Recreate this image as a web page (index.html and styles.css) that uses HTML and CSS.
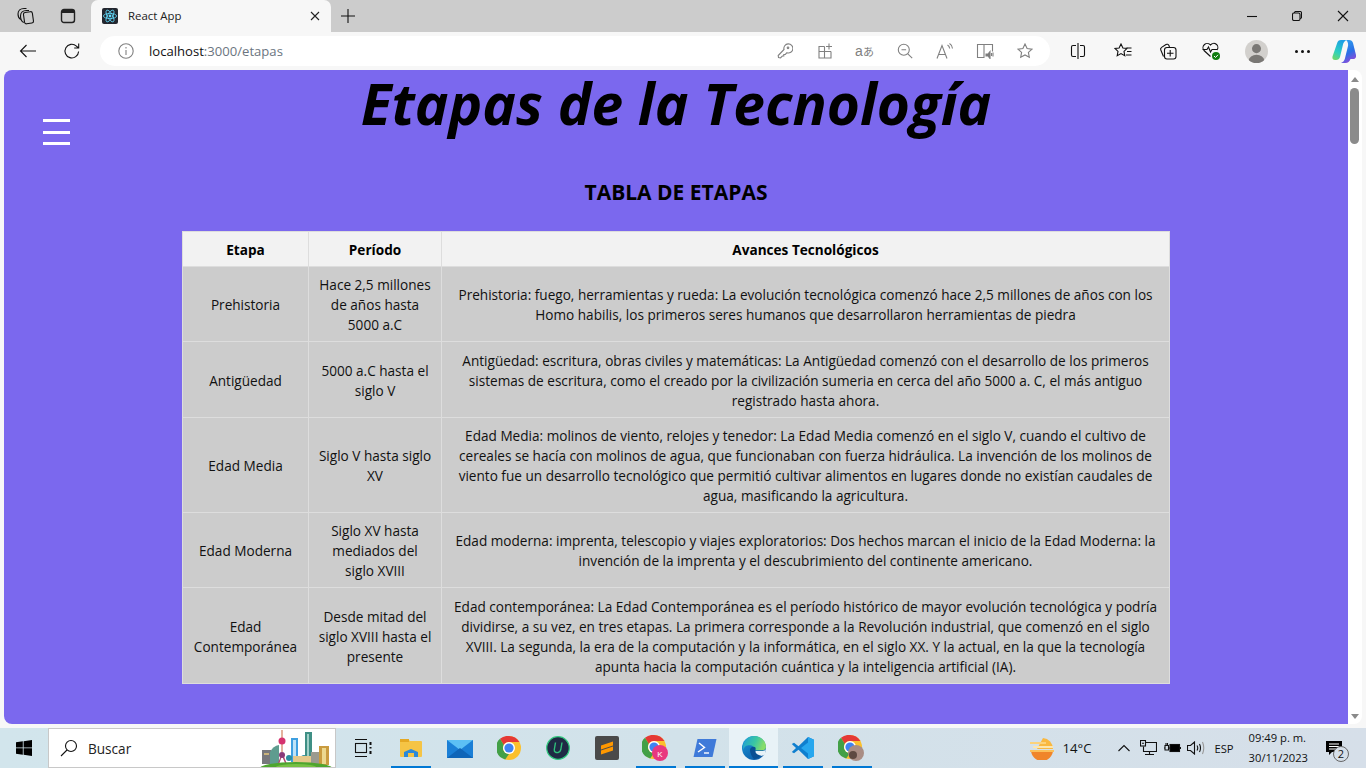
FILE: index.html
```html
<!DOCTYPE html>
<html lang="es">
<head>
<meta charset="utf-8">
<title>React App</title>
<link rel="stylesheet" href="styles.css">
</head>
<body>
<div class="screen">
  <header class="tabstrip">
    <div class="strip-btn first"><svg width="18" height="18" viewBox="0 0 18 18" class="ico"><rect x="7" y="5" width="9" height="11.500" rx="1.800" transform="rotate(-8 11.500 11)"/><path d="M6.800 15.500C4.500 14.500 3.500 12 3.500 9c0-3.500 2.500-5.500 6-5.500h2.500"/><path d="M3.800 12.500C2 11.500 1 9.500 1 7c0-3.500 2.500-5.500 6-5.500h2.500"/></svg></div>
    <div class="strip-btn"><svg width="16" height="16" viewBox="0 0 16 16" class="ico dark"><rect x="1.500" y="1.500" width="13" height="13" rx="2.500"/><path d="M2 3.500h12" stroke-width="3"/></svg></div>
    <div class="tab">
      <svg width="16" height="16" viewBox="0 0 16 16" class="favicon"><rect width="16" height="16" rx="2" fill="#23272f"/><g fill="none" stroke="#61dafb" stroke-width=".8"><ellipse cx="8" cy="8" rx="6.600" ry="2.600"/><ellipse cx="8" cy="8" rx="6.600" ry="2.600" transform="rotate(60 8 8)"/><ellipse cx="8" cy="8" rx="6.600" ry="2.600" transform="rotate(120 8 8)"/></g><circle cx="8" cy="8" r="1.400" fill="#61dafb"/></svg>
      <span class="tab-title">React App</span>
      <svg width="10" height="10" viewBox="0 0 10 10" class="ico tab-x"><path d="M1 1l8 8M9 1l-8 8"/></svg>
    </div>
    <div class="newtab"><svg width="14" height="14" viewBox="0 0 14 14" class="ico"><path d="M7 0v14M0 7h14"/></svg></div>
    <div class="winctl">
      <svg width="10" height="10" viewBox="0 0 10 10" class="ico"><path d="M0 5.500h10"/></svg>
      <svg width="10" height="10" viewBox="0 0 10 10" class="ico"><rect x=".5" y="2" width="7.500" height="7.500" rx="1.500"/><path d="M2.500 2V1.800A1.300 1.300 0 0 1 3.800.5h4.400a1.300 1.300 0 0 1 1.300 1.300v4.400A1.300 1.300 0 0 1 8 7.500"/></svg>
      <svg width="12" height="12" viewBox="0 0 12 12" class="ico"><path d="M1 1l10 10M11 1L1 11"/></svg>
    </div>
  </header>
  <nav class="toolbar">
    <svg width="18" height="14" viewBox="0 0 18 14" class="ico back"><path d="M17 7H1.500M7.500 1L1.500 7l6 6"/></svg>
    <svg width="18" height="18" viewBox="0 0 18 18" class="ico reload"><path d="M15.600 9.500a6.800 6.800 0 1 1-2.200-5.400L15.500 6M15.700 1.500V6H11.200"/></svg>
    <div class="address">
      <svg width="16" height="16" viewBox="0 0 16 16" class="ico-grey info"><circle cx="8" cy="8" r="7.200"/><path d="M8 7v5M8 4v1.400"/></svg>
      <span class="url"><span class="url-host">localhost</span>:3000/etapas</span>
      <div class="addr-icons">
        <svg width="16" height="16" viewBox="0 0 16 16" class="ico-grey"><path d="M7 6.500a4.500 4.500 0 1 1 3 3.200L8.300 11.500H6.800V13H5.300L3.500 14.800 1.500 14.500 1.200 12.500z"/><circle cx="11" cy="4.800" r=".8"/></svg>
        <svg width="16" height="16" viewBox="0 0 16 16" class="ico-grey"><path d="M7.500 3.500H2v11.500h12V8.500M2 8.500h12M7.500 3.500V15M12 0.500v6M9 3.500h6"/></svg>
        <svg width="20" height="16" viewBox="0 0 20 16" class="ico-grey"><text x="0" y="12.500" class="glyph">a</text><text x="8" y="13" class="glyph small">あ</text></svg>
        <svg width="16" height="16" viewBox="0 0 16 16" class="ico-grey"><circle cx="6.800" cy="6.800" r="5.500"/><path d="M4.500 6.800h4.600M10.800 10.800l4.400 4.400"/></svg>
        <svg width="18" height="16" viewBox="0 0 18 16" class="ico-grey"><path d="M1 15.500L6 2.500l5 13M2.800 11.500h6.500M11.500 2c1.200.6 2 1.800 2.200 3.500M13.500 .5c1.800 1 2.800 2.800 3 5"/></svg>
        <svg width="18" height="16" viewBox="0 0 18 16" class="ico-grey"><path d="M8.500 14.500H1.500V1.500h6.500v13M8 1.500h8.500v7"/><path d="M10 11h2l2-2.500v7L12 13h-2z" fill="#777"/><path d="M15.500 10v3M17 9.500v4"/></svg>
        <svg width="16" height="16" viewBox="0 0 16 16" class="ico-grey"><path d="M8 1l2.100 4.500 4.900.6-3.600 3.300.9 4.900L8 11.900l-4.300 2.400.9-4.900L1 6.100l4.900-.6z"/></svg>
      </div>
    </div>
    <div class="tool-icons">
      <svg width="16" height="16" viewBox="0 0 16 16" class="ico"><path d="M6 2.500H3A1.500 1.500 0 0 0 1.500 4v8A1.500 1.500 0 0 0 3 13.500h3M10 2.500h3A1.500 1.500 0 0 1 14.500 4v8a1.500 1.500 0 0 1-1.500 1.500h-3M8 0v16"/></svg>
      <svg width="18" height="16" viewBox="0 0 18 16" class="ico"><path d="M7 1l1.900 4 4.100.5-3 2.900.8 4.300L7 10.600l-3.800 2.100.8-4.300-3-2.900L5.100 5zM12.500 5h5M13 8.500h4.500M12 12h5.500"/></svg>
      <svg width="18" height="18" viewBox="0 0 18 18" class="ico"><rect x="5.500" y="5.500" width="11.500" height="11.500" rx="2.500"/><path d="M11.200 8v6.500M8 11.200h6.500M4.500 14.500L1.800 8a2 2 0 0 1 .8-2.600L7 2.500a2 2 0 0 1 2.800.8L10.500 5"/></svg>
      <svg width="20" height="20" viewBox="0 0 20 20" class="ico health"><path d="M9.500 15.500L3 9.500A4 4 0 0 1 9.500 4a4 4 0 0 1 6.500 5M1.500 8.500H6l1.500-2.500 2 5 1.500-2.500h5.500"/><circle cx="15" cy="15" r="4" fill="#107c10" stroke="none"/><path d="M13 15l1.500 1.500L17 13.800" stroke="#fff" stroke-width="1"/></svg>
      <svg width="23" height="23" viewBox="0 0 24 24" class="avatar"><defs><clipPath id="avclip"><circle cx="12" cy="12" r="12"/></clipPath></defs><circle cx="12" cy="12" r="12" fill="#d2d0cd"/><g clip-path="url(#avclip)" fill="#7a7875"><circle cx="12" cy="9" r="4.700"/><ellipse cx="12" cy="21" rx="8" ry="5.500"/></g></svg>
      <div class="dots"><span></span><span></span><span></span></div>
      <svg width="24" height="24" viewBox="0 0 24 24" class="copilot"><defs><linearGradient id="cp1" x1=".6" y1="0" x2=".2" y2="1"><stop offset="0" stop-color="#1c9ee6"/><stop offset=".6" stop-color="#2dd0c0"/><stop offset="1" stop-color="#6fd86a"/></linearGradient><linearGradient id="cp2" x1=".3" y1="0" x2=".7" y2="1"><stop offset="0" stop-color="#2fa0ee"/><stop offset=".55" stop-color="#2b6fe6"/><stop offset="1" stop-color="#9b46d8"/></linearGradient></defs><path d="M14 1h3c2 0 3.500 1 4 3l3 12c.5 2-.5 4-3 4h-2.500c-1 2.500-2.500 4-5 4H9c2-.8 3.200-2 3.800-4L16 7c.4-2.500-.4-5-2-6z" fill="url(#cp2)"/><path d="M9 1h5.500c-2 1-3 2.500-3.500 4.500L8 18c-.5 2-2 3-4 3H3C1 21 0 19.500.5 17.500L5 4.500C5.600 2 7 1 9 1z" fill="url(#cp1)"/></svg>
    </div>
  </nav>
  <div class="viewport">
    <main class="page">
      <button class="burger" aria-label="Menú"><span></span><span></span><span></span></button>
      <h1 class="title">Etapas de la Tecnología</h1>
      <h2 class="subtitle">TABLA DE ETAPAS</h2>
      <table class="stages">
        <colgroup><col class="c1"><col class="c2"><col class="c3"></colgroup>
        <thead>
          <tr class="rh"><th>Etapa</th><th>Período</th><th>Avances Tecnológicos</th></tr>
        </thead>
        <tbody>
          <tr class="r75"><td>Prehistoria</td><td>Hace 2,5 millones<br>de años hasta<br>5000 a.C</td><td>Prehistoria: fuego, herramientas y rueda: La evolución tecnológica comenzó hace 2,5 millones de años con los<br>Homo habilis, los primeros seres humanos que desarrollaron herramientas de piedra</td></tr>
          <tr class="r76"><td>Antigüedad</td><td>5000 a.C hasta el<br>siglo V</td><td>Antigüedad: escritura, obras civiles y matemáticas: La Antigüedad comenzó con el desarrollo de los primeros<br>sistemas de escritura, como el creado por la civilización sumeria en cerca del año 5000 a. C, el más antiguo<br>registrado hasta ahora.</td></tr>
          <tr class="r95"><td>Edad Media</td><td>Siglo V hasta siglo<br>XV</td><td>Edad Media: molinos de viento, relojes y tenedor: La Edad Media comenzó en el siglo V, cuando el cultivo de<br>cereales se hacía con molinos de agua, que funcionaban con fuerza hidráulica. La invención de los molinos de<br>viento fue un desarrollo tecnológico que permitió cultivar alimentos en lugares donde no existían caudales de<br>agua, masificando la agricultura.</td></tr>
          <tr class="r75"><td>Edad Moderna</td><td>Siglo XV hasta<br>mediados del<br>siglo XVIII</td><td>Edad moderna: imprenta, telescopio y viajes exploratorios: Dos hechos marcan el inicio de la Edad Moderna: la<br>invención de la imprenta y el descubrimiento del continente americano.</td></tr>
          <tr class="r96"><td>Edad<br>Contemporánea</td><td>Desde mitad del<br>siglo XVIII hasta el<br>presente</td><td>Edad contemporánea: La Edad Contemporánea es el período histórico de mayor evolución tecnológica y podría<br>dividirse, a su vez, en tres etapas. La primera corresponde a la Revolución industrial, que comenzó en el siglo<br>XVIII. La segunda, la era de la computación y la informática, en el siglo XX. Y la actual, en la que la tecnología<br>apunta hacia la computación cuántica y la inteligencia artificial (IA).</td></tr>
        </tbody>
      </table>
    </main>
    <aside class="scrollbar">
      <span class="arrow-up"></span>
      <span class="thumb"></span>
      <span class="arrow-down"></span>
    </aside>
  </div>
  <footer class="taskbar">
    <div class="start"><svg width="16" height="16" viewBox="0 0 16 16" fill="#000"><path d="M0 2.300L6.800 1.300V7.500H0zM7.600 1.200L16 0V7.500H7.600zM0 8.300H6.800V14.700L0 13.700zM7.600 8.300H16V16L7.600 14.800z"/></svg></div>
    <div class="search">
      <svg width="18" height="18" viewBox="0 0 18 18" class="ico"><circle cx="11" cy="7" r="5.500"/><path d="M7 11l-6 6"/></svg>
      <span class="search-text">Buscar</span>
      <svg width="78" height="38" viewBox="0 0 78 38" class="city">
        <rect x="5" y="20" width="9" height="14" fill="#77777c"/><rect x="7" y="23" width="5" height="2" fill="#c9b27a"/>
        <path d="M13 34V22q3-6 9-7v19z" fill="#5f9c8f"/>
        <path d="M24.500 0h1v22h-1z" fill="#c9663c"/><path d="M21 33l3.500-9h1.500l3.500 9h-1.500L25 26l-2.500 7z" fill="#b44a72"/>
        <circle cx="25" cy="11" r="3.500" fill="#d5336f"/><circle cx="25" cy="25" r="3" fill="#8a3a7a"/>
        <rect x="34" y="8" width="7" height="24" fill="#3f9fe0"/><rect x="36" y="10" width="3" height="20" fill="#bfe3f7"/>
        <circle cx="32" cy="28" r="3" fill="#2a8f9f"/><circle cx="47" cy="28" r="3" fill="#2a8f9f"/>
        <rect x="48" y="2" width="7" height="26" fill="#3f8f85"/><rect x="50" y="4" width="2" height="22" fill="#9fcfc7"/>
        <rect x="36" y="26" width="18" height="8" fill="#e5c88a"/>
        <rect x="54" y="22" width="8" height="12" fill="#9b9a8f"/>
        <rect x="62" y="16" width="10" height="19" fill="#c99b3f"/><rect x="65" y="18" width="4" height="16" fill="#ecd88f"/>
        <ellipse cx="39" cy="39" rx="37" ry="7" fill="#4ea52f"/><ellipse cx="39" cy="37" rx="20" ry="3" fill="#76c043"/>
      </svg>
    </div>
    <div class="apps">
      <div class="app"><svg width="20" height="20" viewBox="0 0 20 20" class="ico"><path d="M3 1.500h12M3 18.500h12"/><rect x="3.500" y="5.500" width="11" height="9"/><path d="M18.500 4v3M18.500 9v1.500M18.500 13v3" stroke-width="2"/></svg></div>
      <div class="app on"><svg width="22" height="20" viewBox="0 0 22 20"><path d="M0 2a1 1 0 0 1 1-1h7l2 2h11a1 1 0 0 1 1 1v14a1 1 0 0 1-1 1H1a1 1 0 0 1-1-1z" fill="#f5c445"/><rect y="1" width="9" height="3" fill="#e5a823"/><path d="M4 19v-5l7-3 7 3v5h-4v-4H8v4z" fill="#2c89d9"/></svg></div>
      <div class="app"><svg width="26" height="20" viewBox="0 0 26 20"><rect y="2" width="26" height="18" fill="#1a7fd6"/><path d="M0 2l13 10L26 2z" fill="#5cc0f5"/><path d="M0 20l13-10 13 10z" fill="#0f65b8"/></svg></div>
      <div class="app"><svg width="24" height="24" viewBox="0 0 24 24"><use href="#chrome-logo"/></svg></div>
      <div class="app"><svg width="24" height="24" viewBox="0 0 24 24"><circle cx="12" cy="12" r="11.300" fill="#1f2a44" stroke="#31c97e" stroke-width="1.200"/><path d="M9.500 6.500L8.300 13.500c-.4 2.500 2 3.500 3.800 3 1.700-.4 2.400-1.600 2.700-3L16 6.500" fill="none" stroke="#2fbf7a" stroke-width="1.400"/></svg></div>
      <div class="app"><svg width="24" height="24" viewBox="0 0 24 24"><rect width="24" height="24" rx="2" fill="#4a4a4a"/><path d="M6 9.500L18 5.500v4L6 13.500zM18 14.500L6 18.500v-4L18 10.500z" fill="#ff9800"/></svg></div>
      <div class="app on"><svg width="28" height="26" viewBox="0 0 28 26"><use href="#chrome-logo" width="24" height="24"/><circle cx="18" cy="18" r="8" fill="#e8387f"/><text x="18" y="21.500" class="badge-k">K</text></svg></div>
      <div class="app on"><svg width="24" height="20" viewBox="0 0 24 20"><path d="M4.500 1H23.500L19.500 19H.5z" fill="#3f7ad9"/><path d="M6 5l5.500 4.500L5 14" fill="none" stroke="#fff" stroke-width="1.400"/><path d="M11 15h5" stroke="#fff" stroke-width="1.400"/></svg></div>
      <div class="app on active"><svg width="24" height="24" viewBox="0 0 24 24"><defs><linearGradient id="ed1" x1="0" y1="0" x2="1" y2=".3"><stop offset="0" stop-color="#1c9bdc"/><stop offset=".6" stop-color="#3bc7a2"/><stop offset="1" stop-color="#86dc6a"/></linearGradient><linearGradient id="ed2" x1="0" y1="0" x2=".7" y2="1"><stop offset="0" stop-color="#1c9bdc"/><stop offset="1" stop-color="#0b5aa6"/></linearGradient></defs><circle cx="12" cy="12" r="12" fill="url(#ed2)"/><path d="M12 0c6.600 0 12 4.800 12 11 0 1.800-1 3.200-3.500 3.200H13c0-3-2.500-5-5.500-5S2 10.500 1.500 14C-.5 6.500 5 0 12 0z" fill="url(#ed1)"/><path d="M24 12.500c-.6 1.800-1.800 2.500-4 2.500h-6.500c-1.200 2 0 4 2.500 4.800 2.500.7 5 .2 7-1.800z" fill="#e8f2f7"/><path d="M8 14c0-2 1.500-3.300 3.500-3.300s2.500 1.200 2 3c-.8 2.800 1.500 5.300 5.500 5.800-2 2.300-4.500 3.500-7 3.500-2-2-4-5.500-4-9z" fill="#0a4f93"/></svg></div>
      <div class="app on"><svg width="24" height="24" viewBox="0 0 24 24"><path d="M17 1L7.500 10.200 3 6.800l-2.200 1.200L5 12 .8 16l2.200 1.200 4.500-3.400L17 23l6-2.800V3.800z" fill="#0f7fcf"/><path d="M17 1l6 2.800v16.400L17 23V6.500L10 12l7 5.500z" fill="#27a7ee"/></svg></div>
      <div class="app on"><svg width="28" height="26" viewBox="0 0 28 26"><use href="#chrome-logo" width="24" height="24"/><circle cx="18" cy="18" r="8" fill="#a98d84"/><circle cx="15" cy="20" r="4" fill="#5e4a42"/></svg></div>
    </div>
    <div class="tray">
      <svg width="24" height="24" viewBox="0 0 24 24" class="sun"><path d="M1 14h22a11 11 0 0 1-22 0z" fill="#f0852a"/><path d="M13 2a11 11 0 0 1 10 11H7z" fill="#f9b840"/><path d="M0 7h16" stroke="#fcd27a" stroke-width="2"/><path d="M3 11h20" stroke="#fde6ad" stroke-width="2"/><path d="M0 15h24" stroke="#fbc15a" stroke-width="2"/></svg>
      <span class="temp">14°C</span>
      <svg width="12" height="8" viewBox="0 0 12 8" class="ico chev"><path d="M.5 7L6 1.500 11.500 7"/></svg>
      <svg width="17" height="16" viewBox="0 0 17 16" class="ico tray-net"><path d="M5.500 2.500h11v9H3.500V6.500M9.500 11.500v3M5 14.500h9"/><rect x=".5" y=".5" width="5" height="5.500"/><path d="M2 3.200h2"/></svg>
      <svg width="17" height="14" viewBox="0 0 17 14" class="ico tray-bat"><path d="M0 7h1M1 4.500h3.500V9H1zM2 4.500V2M3.500 4.500V2M4.500 7H6"/><rect x="6" y="3.500" width="9.500" height="7" fill="#000"/><path d="M16.500 6v2"/></svg>
      <svg width="18" height="14" viewBox="0 0 18 14" class="ico tray-vol"><path d="M.5 4.500h3l4-3.500v12l-4-3.500h-3zM10 4.500q1.500 2.500 0 5M12.500 3q2 4 0 8"/><path d="M15.500 1q2.500 6 0 12" stroke="#999"/></svg>
      <span class="lang">ESP</span>
      <div class="clock"><span>09:49 p. m.</span><span>30/11/2023</span></div>
      <div class="notif"><svg width="16" height="14" viewBox="0 0 16 14" fill="#000"><path d="M0 0h16v11H6l-3 3v-3H0z"/><path d="M3 3h10M3 5.500h10M3 8h7" stroke="#fff"/></svg><span class="notif-count">2</span></div>
    </div>
  </footer>
</div>
<svg class="defs" width="0" height="0" viewBox="0 0 24 24"><defs><symbol id="chrome-logo" viewBox="0 0 24 24"><circle cx="12" cy="12" r="12" fill="#fbc02d"/><path d="M12 0a12 12 0 0 1 10.400 6H12a6 6 0 0 0-5.200 3L3 2.800A12 12 0 0 1 12 0z" fill="#e53935"/><path d="M3 2.800L6.800 9a6 6 0 0 0 5.200 9l-3.800 5.400A12 12 0 0 1 3 2.800z" fill="#43a047"/><circle cx="12" cy="12" r="6" fill="#fff"/><circle cx="12" cy="12" r="4.600" fill="#3f83f2"/></symbol></defs></svg>
</body>
</html>
```
FILE: styles.css
```css
* { box-sizing: border-box; }
html, body { margin: 0; height: 100%; overflow: hidden; }
body { font-family: "Open Sans", "Noto Sans", sans-serif; color: #000; }
.defs { display: block; height: 0; }

.screen { width: 1366px; height: 768px; display: flex; flex-direction: column; background: #f7f7f7; overflow: hidden; }
.ico { fill: none; stroke: #111; stroke-width: 1.1; flex: none; }
.ico.dark { stroke: #222; stroke-width: 1.4; }
.ico-grey { fill: none; stroke: #808080; stroke-width: 1.1; flex: none; }

/* tab strip */
.tabstrip { height: 32px; background: #ccc; display: flex; align-items: center; flex: none; }
.strip-btn { width: 42px; display: flex; justify-content: center; }
.strip-btn.first { margin-left: 5px; }
.tab { width: 240px; height: 32px; margin-left: 2px; background: #f7f7f7; border-radius: 7px 7px 0 0; display: flex; align-items: center; padding: 0 11px; }
.favicon { flex: none; }
.tab-title { font-size: 11.4px; margin: 0 0 1px 10px; flex: 1; color: #222; }
.tab-x { stroke: #222; }
.newtab { margin-left: 10px; display: flex; }
.winctl { margin-left: auto; display: flex; align-items: center; gap: 35px; padding-right: 17px; }

/* toolbar */
.toolbar { height: 38px; flex: none; display: flex; align-items: center; background: #f7f7f7; }
.back { margin-left: 19px; }
.reload { margin-left: 26px; }
.address { margin-left: 19px; width: 950px; height: 30px; flex: none; background: #fff; border-radius: 15px; display: flex; align-items: center; }
.info { margin-left: 18px; }
.url { margin-left: 15px; font-size: 13.1px; color: #6b7580; }
.url-host { color: #111; }
.addr-icons { margin-left: auto; display: grid; grid-auto-flow: column; grid-auto-columns: 40px; justify-items: center; align-items: center; padding-right: 5px; }
.glyph { font-size: 14px; fill: #808080; stroke: none; font-family: "Liberation Sans", sans-serif; }
.glyph.small { font-size: 11px; font-family: "Noto Sans CJK JP", sans-serif; }
.tool-icons { flex: none; display: grid; grid-auto-flow: column; grid-auto-columns: 45px; justify-items: center; align-items: center; margin-left: 5px; }
.health { margin-right: 4px; }
.avatar { margin-right: 2px; }
.dots { display: flex; gap: 3px; }
.dots span { width: 3px; height: 3px; border-radius: 50%; background: #111; }
.copilot { justify-self: start; margin-left: 7px; }

/* viewport */
.viewport { flex: none; height: 654px; margin-left: 4px; width: 1358px; display: flex; }
.page { position: relative; width: 1344px; background: #7b68ee; border-radius: 8px 0 0 8px; display: flex; flex-direction: column; align-items: center; }
.burger { position: absolute; left: 39px; top: 49px; width: 27px; height: 26px; padding: 0; border: 0; background: none; display: flex; flex-direction: column; justify-content: space-between; }
.burger span { display: block; height: 3px; background: #fff; }
.title { margin: 0; font-size: 56.8px; line-height: 66px; font-weight: 700; font-style: italic; white-space: nowrap; }
.subtitle { margin: 41px 0 0; font-size: 21px; line-height: 30px; font-weight: 700; }
.stages { margin-top: 24px; width: 988px; table-layout: fixed; border-collapse: collapse; font-size: 13.6px; line-height: 20px; color: #111; text-align: center; }
.c1 { width: 126px; }
.c2 { width: 133px; }
.stages th, .stages td { border: 1px solid #ddd; font-weight: 400; white-space: nowrap; }
.stages th { background: #f2f2f2; font-weight: 700; color: #000; padding: 2px 6px 0; }
.stages td { background: #ccc; padding: 2px 6px 0; }
.rh { height: 35px; }
.r75 { height: 75px; }
.r76 { height: 76px; }
.r95 { height: 95px; }
.r96 { height: 96px; }

/* scrollbar */
.scrollbar { width: 14px; background: #fff; border-radius: 0 8px 8px 0; display: flex; flex-direction: column; align-items: center; padding: 7px 1px 0 0; }
.arrow-up { width: 0; height: 0; border: 4px solid transparent; border-top: 0; border-bottom: 5px solid #8a8a8a; }
.thumb { width: 9px; height: 56px; background: #8b8b8b; border-radius: 5px; margin-top: 6px; }
.arrow-down { margin-top: auto; margin-bottom: 5px; width: 0; height: 0; border: 4px solid transparent; border-bottom: 0; border-top: 5px solid #8a8a8a; }

/* taskbar */
.taskbar { margin-top: 4px; height: 40px; flex: none; display: flex; align-items: center; background: linear-gradient(90deg, #d2e5ec, #d2e2ea 50%, #d6dfe9); }
.start { width: 48px; display: flex; justify-content: center; }
.search { width: 288px; height: 40px; background: #fff; border: 1px solid #c8c8c8; display: flex; align-items: center; padding-left: 11px; position: relative; overflow: hidden; }
.search-text { margin-left: 10px; font-size: 13.6px; color: #222; }
.city { position: absolute; right: 0; bottom: -1px; }
.apps { display: flex; margin-left: 1px; }
.app { width: 49px; height: 40px; display: flex; align-items: center; justify-content: center; position: relative; }
.app.on::after { content: ""; position: absolute; left: 5px; right: 4px; bottom: 0; height: 2px; background: #0078d4; }
.app.active { background: #e8f2f7; }
.app.active::after { left: 0; right: 0; }
.badge-k { font-size: 8px; fill: #fff; text-anchor: middle; font-family: "Liberation Sans", sans-serif; }
.tray { margin-left: auto; display: flex; align-items: center; height: 40px; }
.sun { margin-right: 8px; }
.temp { font-size: 13.2px; color: #111; }
.chev { margin-left: 26px; }
.tray-net { margin-left: 10px; }
.tray-bat { margin-left: 7px; }
.tray-vol { margin-left: 6px; }
.lang { font-size: 11.2px; color: #111; margin-left: 10px; }
.clock { display: flex; flex-direction: column; font-size: 11.2px; line-height: 20px; color: #111; margin-left: 15px; }
.notif { position: relative; width: 28px; margin: 0 12px 0 18px; display: flex; }
.notif-count { position: absolute; left: 7px; top: 5px; width: 16px; height: 16px; border: 1px solid #666; border-radius: 50%; background: #d6dfe9; font-size: 11px; line-height: 14px; text-align: center; color: #111; }
```
